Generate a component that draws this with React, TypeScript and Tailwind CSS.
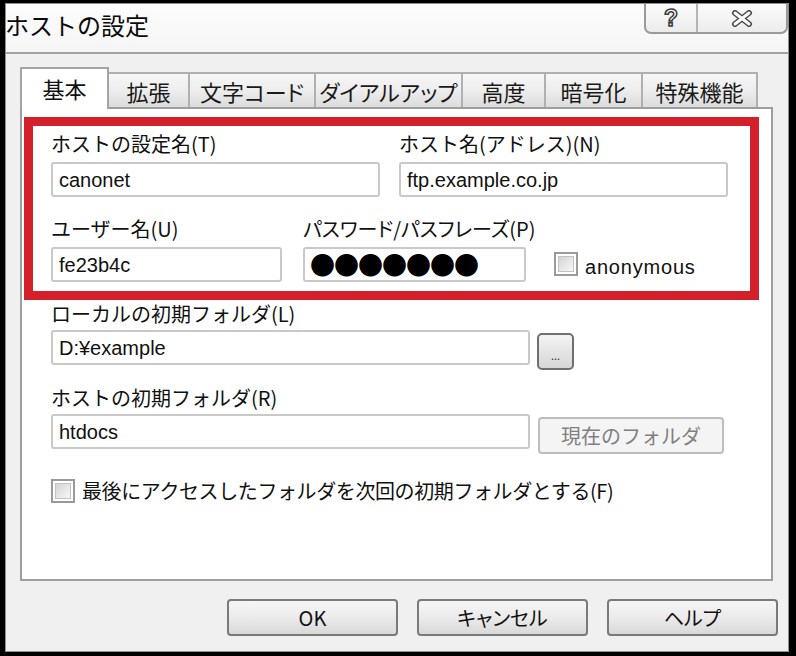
import React from "react";

const tabs = [
  { label: "基本", w: "w-[89px]", active: true },
  { label: "拡張", w: "w-[81px]" },
  { label: "文字コード", w: "w-[126px]" },
  { label: "ダイアルアップ", w: "w-[147px]" },
  { label: "高度", w: "w-[83px]" },
  { label: "暗号化", w: "w-[97px]" },
  { label: "特殊機能", w: "w-[115px]" },
];

function TextBox({ value, className }: { value: string; className: string }) {
  return (
    <div
      className={`h-[35px] flex items-center bg-white border-2 border-[#c9c9c9] rounded-[3px] pl-[6px] font-['Liberation_Sans',sans-serif] text-[20px] text-[#111] ${className}`}
    >
      {value}
    </div>
  );
}

function CheckBox() {
  return (
    <div className="w-[24px] h-[24px] border-2 border-[#9a9a9a] bg-white p-[2px] shrink-0">
      <div className="w-full h-full bg-gradient-to-br from-[#d4d4d4] to-[#f7f7f7] border border-[#c2c2c2]" />
    </div>
  );
}

function Button({ label }: { label: string }) {
  return (
    <button className="w-[171px] h-[37px] border-2 border-[#7a7a7a] rounded-[4px] bg-gradient-to-b from-[#f6f6f6] via-[#ebebeb] to-[#d9d9d9] text-[20px] leading-none text-[#111] [font-feature-settings:'palt']">
      {label}
    </button>
  );
}

export default function App() {
  return (
    <div className="w-[796px] h-[656px] bg-black pl-[5px] pt-[3px] pr-[7px] pb-[4px] font-['Noto_Sans_CJK_JP',sans-serif] text-[#111]">
      <div className="h-full flex flex-col border border-[#8f8f8f] bg-[#f0f0f0]">
        {/* Title bar */}
        <div className="h-[50px] shrink-0 flex items-start justify-between bg-gradient-to-b from-[#fdfdfd] to-[#f5f5f5] border-b-2 border-[#a3a3a3]">
          <span className="mt-[6px] -ml-[1px] text-[24px] leading-[30px] text-[#0a0a0a]">
            ホストの設定
          </span>
          <div className="flex h-[30px] border-2 border-t-0 border-[#9a9a9a] rounded-b-[7px] overflow-hidden bg-gradient-to-b from-[#fbfbfb] to-[#ececec]">
            <div className="w-[52px] flex items-center justify-center border-r-2 border-[#b4b4b4]">
              <span className="text-[23px] leading-none font-bold text-[#fafafa] [-webkit-text-stroke:1.5px_#3c3c3c] font-['Liberation_Sans',sans-serif]">
                ?
              </span>
            </div>
            <div className="w-[88px] flex items-center justify-center">
              <svg width="22" height="17" viewBox="0 0 22 17">
                <path d="M4 3 L18 14 M18 3 L4 14" stroke="#4a4a4a" strokeWidth="6" strokeLinecap="round" />
                <path d="M4 3 L18 14 M18 3 L4 14" stroke="#fbfbfb" strokeWidth="3" strokeLinecap="round" />
              </svg>
            </div>
          </div>
        </div>

        {/* Client */}
        <div className="flex-1 flex flex-col px-[14px] pt-[13px]">
          {/* Tabs */}
          <div className="h-[40px] flex items-end [font-feature-settings:'palt']">
            {tabs.map((t) =>
              t.active ? (
                <div
                  key={t.label}
                  className={`${t.w} h-[42px] -mb-[2px] relative z-10 bg-white border-2 border-b-0 border-[#a4a4a4] flex items-center justify-center text-[22px] leading-none pb-[2px]`}
                >
                  {t.label}
                </div>
              ) : (
                <div
                  key={t.label}
                  className={`${t.w} h-[35px] bg-gradient-to-b from-[#f7f7f7] via-[#ededed] to-[#dcdcdc] border-2 border-b-0 border-l-0 border-[#b0b0b0] flex items-center justify-center text-[22px] leading-none text-[#1a1a1a]`}
                >
                  {t.label}
                </div>
              )
            )}
          </div>

          {/* Panel */}
          <div className="w-[753px] h-[474px] bg-white border-2 border-[#9e9e9e] pl-[2px] pt-[8px]">
            {/* Highlighted box */}
            <div className="w-[735px] border-[9px] border-[#d3202b] pl-[18px] pt-[6px] pb-[9px]">
              <div className="flex gap-[19px]">
                <div className="w-[329px]">
                  <div className="h-[24px] text-[20px] leading-[24px]">ホストの設定名(T)</div>
                  <TextBox value="canonet" className="mt-[6px]" />
                </div>
                <div className="w-[329px]">
                  <div className="h-[24px] text-[20px] leading-[24px]">ホスト名(アドレス)(N)</div>
                  <TextBox value="ftp.example.co.jp" className="mt-[6px]" />
                </div>
              </div>
              <div className="flex items-end mt-[20px]">
                <div className="w-[231px]">
                  <div className="h-[24px] text-[20px] leading-[24px]">ユーザー名(U)</div>
                  <TextBox value="fe23b4c" className="mt-[6px]" />
                </div>
                <div className="w-[223px] ml-[21px]">
                  <div className="h-[24px] text-[20px] leading-[24px] whitespace-nowrap [font-feature-settings:'palt']">
                    パスワード/パスフレーズ(P)
                  </div>
                  <div className="mt-[6px] h-[35px] flex items-center bg-white border-2 border-[#c9c9c9] rounded-[3px] pl-[5px] text-[25px] leading-none tracking-[-1px] text-black">
                    ●●●●●●●
                  </div>
                </div>
                <div className="ml-[28px] mb-[3px] h-[30px] flex items-center gap-[7px]">
                  <CheckBox />
                  <span className="font-['Liberation_Sans',sans-serif] text-[20px] leading-none mt-[6px] tracking-[0.8px]">
                    anonymous
                  </span>
                </div>
              </div>
            </div>

            {/* Folder settings */}
            <div className="pl-[27px]">
              <div className="mt-[2px] h-[24px] text-[20px] leading-[24px]">ローカルの初期フォルダ(L)</div>
              <div className="mt-[4px] flex items-start">
                <TextBox value="D:¥example" className="w-[479px]" />
                <button className="ml-[7px] mt-[3px] w-[37px] h-[37px] border-2 border-[#6f6f6f] rounded-[5px] bg-gradient-to-b from-[#f4f4f4] to-[#d6d6d6] flex items-end justify-center pb-[7px] text-[11px] leading-none text-[#333]">
                  ...
                </button>
              </div>
              <div className="mt-[16px] h-[24px] text-[20px] leading-[24px]">ホストの初期フォルダ(R)</div>
              <div className="mt-[4px] flex items-start">
                <TextBox value="htdocs" className="w-[479px]" />
                <button className="ml-[8px] mt-[3px] w-[186px] h-[37px] border-2 border-[#bdbdbd] rounded-[4px] bg-[#f4f4f4] text-[20px] leading-none text-[#808080]">
                  現在のフォルダ
                </button>
              </div>
              <div className="mt-[25px] flex items-center gap-[7px]">
                <CheckBox />
                <span className="text-[20px] leading-none tracking-[-0.4px]">
                  最後にアクセスしたフォルダを次回の初期フォルダとする(F)
                </span>
              </div>
            </div>
          </div>

          {/* Dialog buttons */}
          <div className="mt-[18px] flex justify-end gap-[19px] -mr-[4px]">
            <Button label="OK" />
            <Button label="キャンセル" />
            <Button label="ヘルプ" />
          </div>
        </div>
      </div>
    </div>
  );
}
